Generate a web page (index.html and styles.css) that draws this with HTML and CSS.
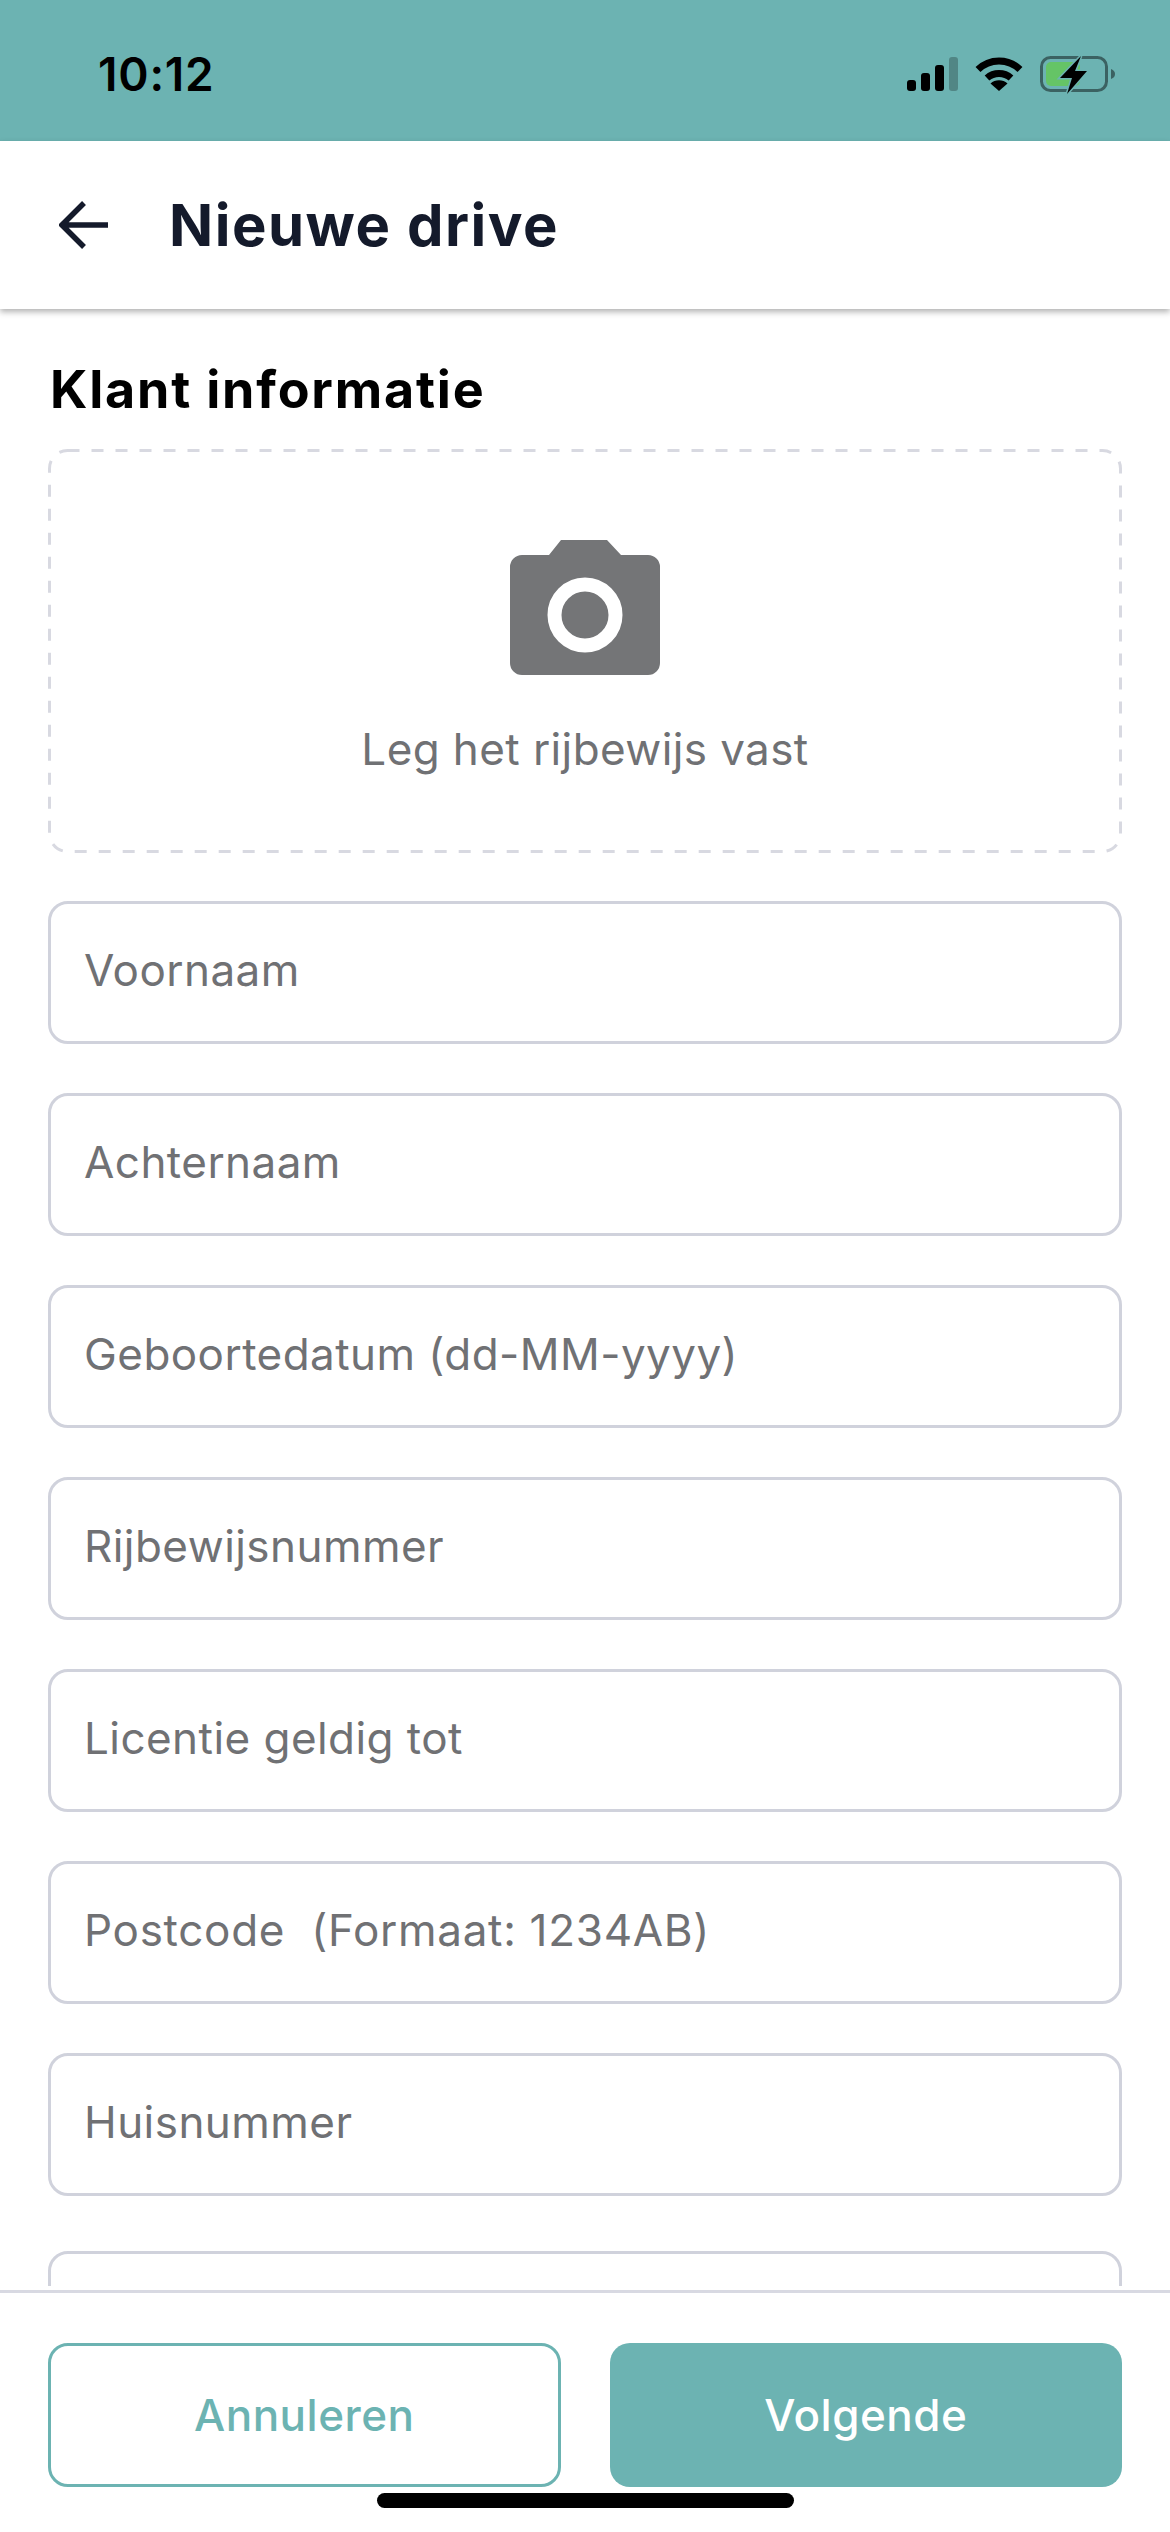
FILE: index.html
```html
<!DOCTYPE html>
<html lang="en">

<head>
    <meta charset="UTF-8">
    <meta name="viewport" content="width=device-width, initial-scale=1.0">
    <title>Nieuwe drive</title>
    <link rel="stylesheet" href="styles.css">
</head>

<body>
    <div class="app">
        <div class="status-bar">
            <span class="time">10:12</span>
            <div class="status-icons">
                <svg class="icon-signal" width="51" height="34" viewBox="0 0 51 34">
                    <rect x="0" y="23" width="9" height="11" rx="3" fill="#000"/>
                    <rect x="14" y="16" width="9" height="18" rx="3" fill="#000"/>
                    <rect x="28" y="8" width="9" height="26" rx="3" fill="#000"/>
                    <rect x="42" y="0" width="9" height="34" rx="3" fill="#000" fill-opacity="0.25"/>
                </svg>
                <svg class="icon-wifi" width="48" height="36" viewBox="0 0 48 36">
                    <path d="M3 14.5 A30 30 0 0 1 45 14.5" fill="none" stroke="#000" stroke-width="7"/>
                    <path d="M12 23 A18 18 0 0 1 36 23" fill="none" stroke="#000" stroke-width="7"/>
                    <path d="M24 36 L15.5 28.5 A13 13 0 0 1 32.5 28.5 Z" fill="#000"/>
                </svg>
                <svg class="icon-battery" width="75" height="40" viewBox="0 0 75 40">
                    <rect x="1.5" y="2.5" width="65" height="33" rx="9" fill="none" stroke="#000" stroke-opacity="0.45" stroke-width="3"/>
                    <path d="M71 14 C74 15 75 17 75 19 C75 21 74 23 71 24 Z" fill="#000" fill-opacity="0.45"/>
                    <rect x="6" y="7" width="34" height="24" rx="5" fill="#65c466"/>
                    <path d="M41 1 L20 23 L32 23 L27 39 L47 16 L35 16 Z" fill="#000" stroke="#6cb3b2" stroke-width="3" paint-order="stroke"/>
                </svg>
            </div>
        </div>

        <div class="header">
            <svg class="back-icon" width="50" height="48" viewBox="0 0 50 48">
                <path d="M49 24 H4 M25 2 L3 24 L25 46" fill="none" stroke="#141a2b" stroke-width="5.5"/>
            </svg>
            <h1>Nieuwe drive</h1>
        </div>

        <div class="content">
            <h2>Klant informatie</h2>

            <div class="scan-box">
                <svg class="scan-border" width="1074" height="404" viewBox="0 0 1074 404">
                    <rect x="1.5" y="1.5" width="1071" height="401" rx="18" fill="none" stroke="#d8d9e1" stroke-width="3" stroke-dasharray="12 12"/>
                </svg>
                <svg class="camera-icon" width="150" height="135" viewBox="0 0 150 135">
                    <path d="M51 0 H97 L111 15 H138 A12 12 0 0 1 150 27 V123 A12 12 0 0 1 138 135 H12 A12 12 0 0 1 0 123 V27 A12 12 0 0 1 12 15 H39 Z" fill="#747577"/>
                    <circle cx="75" cy="75" r="30.5" fill="none" stroke="#fff" stroke-width="14"/>
                </svg>
                <span>Leg het rijbewijs vast</span>
            </div>

            <div class="field">Voornaam</div>
            <div class="field">Achternaam</div>
            <div class="field">Geboortedatum (dd-MM-yyyy)</div>
            <div class="field">Rijbewijsnummer</div>
            <div class="field">Licentie geldig tot</div>
            <div class="field field-postcode">Postcode&nbsp; (Formaat: 1234AB)</div>
            <div class="field">Huisnummer</div>
            <div class="field"></div>
        </div>

        <div class="footer">
            <button class="button button-outline">Annuleren</button>
            <button class="button button-filled">Volgende</button>
        </div>

        <div class="home-indicator"></div>
    </div>
</body>

</html>
```

FILE: styles.css
```css
* {
    box-sizing: border-box;
}

body {
    font-family: Inter, 'Noto Sans', sans-serif;
    margin: 0;
    background-color: white;
}

.app {
    width: 1170px;
    height: 2532px;
    display: flex;
    flex-direction: column;
    overflow: hidden;
}

.status-bar {
    height: 141px;
    flex-shrink: 0;
    background-color: #6cb3b2;
    padding: 0 55px 0 98px;
    display: flex;
    justify-content: space-between;
    align-items: flex-start;
}

.time {
    margin-top: 46px;
    font-size: 46px;
    line-height: 56px;
    font-weight: 600;
    letter-spacing: 0.8px;
    color: #000;
}

.status-icons {
    margin-top: 55px;
    display: flex;
    align-items: flex-start;
}

.icon-signal {
    margin-top: 2px;
    margin-right: 17px;
}

.icon-wifi {
    margin-right: 17px;
}

.header {
    height: 168px;
    flex-shrink: 0;
    display: flex;
    align-items: center;
    padding-left: 59px;
    background-color: white;
    box-shadow: 0 3px 6px rgba(0, 0, 0, 0.3);
    position: relative;
}

.back-icon {
    margin-right: 60px;
}

h1 {
    margin: 0;
    font-size: 58px;
    font-weight: 700;
    letter-spacing: 1.5px;
    color: #141a2b;
}

.content {
    height: 1977px;
    flex-shrink: 0;
    overflow: hidden;
    padding: 50px 48px 0;
}

h2 {
    margin: 0 0 28px 2px;
    font-size: 52px;
    line-height: 62px;
    font-weight: 700;
    letter-spacing: 1.8px;
    color: #000;
}

.scan-box {
    height: 404px;
    position: relative;
    display: flex;
    flex-direction: column;
    align-items: center;
    padding-top: 91px;
    margin-bottom: 48px;
    font-size: 44px;
    letter-spacing: 0.4px;
    color: #707174;
}

.scan-border {
    position: absolute;
    top: 0;
    left: 0;
}

.camera-icon {
    margin-bottom: 47px;
}

.field {
    height: 143px;
    margin-bottom: 49px;
    border: 3px solid #d0d2dc;
    border-radius: 20px;
    padding: 0 0 5px 33px;
    display: flex;
    align-items: center;
    font-size: 44px;
    letter-spacing: 0.45px;
    color: #707174;
}

.field-postcode {
    letter-spacing: 0.7px;
}

.field:last-child {
    margin-top: 55px;
}

.footer {
    margin-top: 4px;
    flex-shrink: 0;
    height: 197px;
    border-top: 3px solid #d8d9e2;
    padding: 50px 48px 0;
    display: grid;
    grid-template-columns: 1fr 1fr;
    gap: 49px;
}

.button {
    height: 144px;
    border-radius: 20px;
    font-family: Inter, 'Noto Sans', sans-serif;
    font-size: 44px;
    font-weight: 500;
    letter-spacing: 0.5px;
    cursor: pointer;
}

.button-outline {
    background-color: white;
    border: 3px solid #6cb3b2;
    color: #6cb3b2;
}

.button-filled {
    background-color: #6cb3b2;
    border: none;
    color: white;
}

.home-indicator {
    width: 417px;
    height: 15px;
    flex-shrink: 0;
    margin: 6px auto 0;
    background-color: #000;
    border-radius: 8px;
}
```
